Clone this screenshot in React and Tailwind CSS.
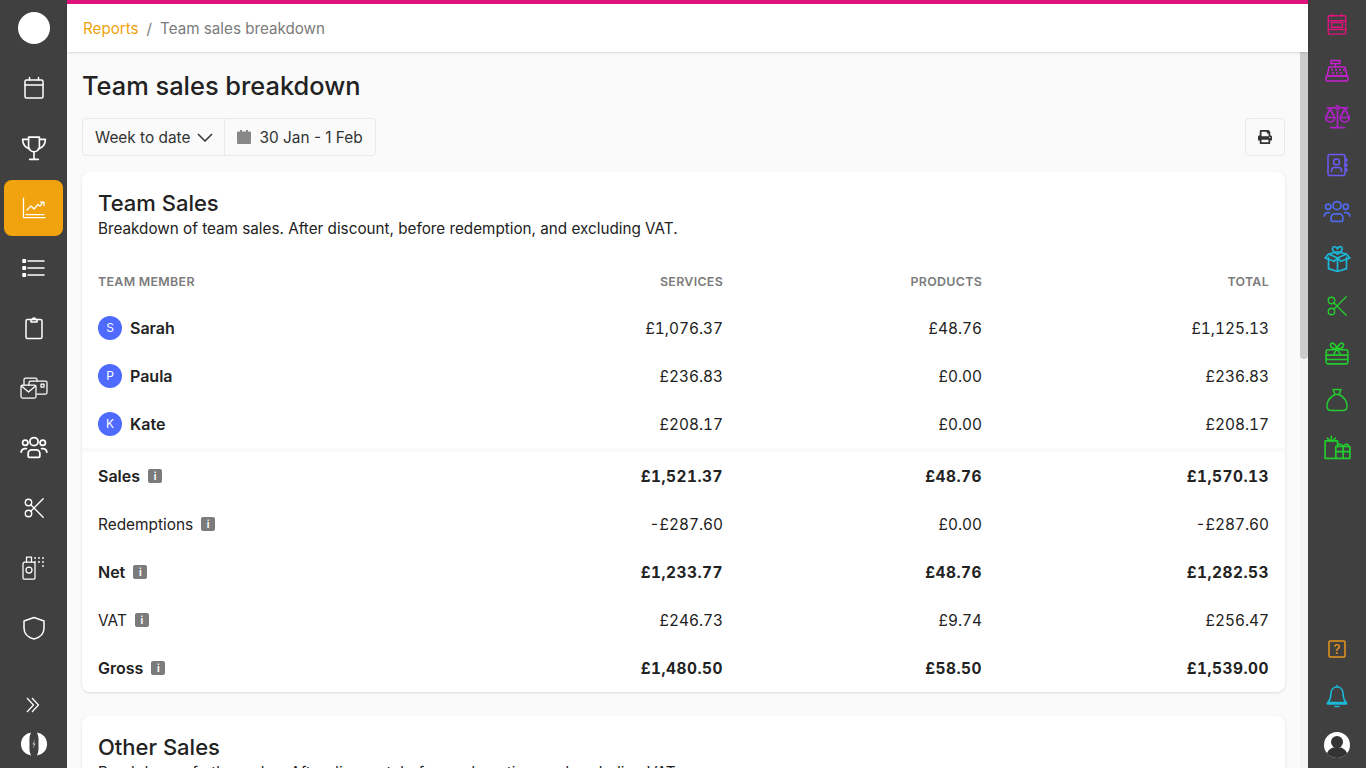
import { FaPrint } from "react-icons/fa";

const stroke = {
  fill: "none",
  stroke: "currentColor",
  strokeWidth: 1.5,
  strokeLinecap: "round",
  strokeLinejoin: "round",
};

function Icon({ size = 24, children, className = "" }) {
  return (
    <svg width={size} height={size} viewBox="0 0 24 24" className={className} {...stroke}>
      {children}
    </svg>
  );
}

/* left rail */
const CalendarIcon = () => (
  <Icon>
    <rect x="3" y="4" width="18" height="18" rx="1.5" />
    <path d="M3 9h18M7.5 1.5V4M16.5 1.5V4" />
  </Icon>
);
const TrophyIcon = () => (
  <Icon size={26}>
    <path d="M7 2h10v8.5a5 5 0 0 1-10 0V2Z" />
    <path d="M7 4H1.500c0 4.500 2 7.500 6.500 9M17 4h5.500c0 4.500-2 7.500-6.500 9M12 15.500V22M8 22.500h8" />
  </Icon>
);
const ChartIcon = () => (
  <Icon>
    <path d="M1.500 2v19.500H23M4 18.500H22" strokeWidth="1.250" />
    <path d="M5 14l4-4 3 3 4-4.500 2 1.500 3-4M18.500 6H22v3.500" strokeWidth="1.250" />
  </Icon>
);
const ListIcon = () => (
  <Icon>
    <path d="M6 5h16M6 12h16M6 19h16" />
    <rect x="1" y="3.800" width="2.400" height="2.400" fill="currentColor" />
    <rect x="1" y="10.800" width="2.400" height="2.400" fill="currentColor" />
    <rect x="1" y="17.800" width="2.400" height="2.400" fill="currentColor" />
  </Icon>
);
const ClipboardIcon = () => (
  <Icon>
    <rect x="4" y="3.500" width="16" height="19" rx="1.500" />
    <path d="M9 3.500h1.500a1.500 1.500 0 0 1 3 0H15V6H9V3.500Z" />
  </Icon>
);
const MailCardIcon = () => (
  <svg width="28" height="22" viewBox="0 0 28 22" {...stroke} strokeWidth="1.250">
    <path d="M4 8V2.500A1.500 1.500 0 0 1 5.500 1h10A1.500 1.500 0 0 1 17 2.500V4" />
    <path d="M9 8V5.500A1.500 1.500 0 0 1 10.500 4h15A1.500 1.500 0 0 1 27 5.500v10a1.500 1.500 0 0 1-1.500 1.500H17" />
    <rect x="1" y="8" width="15" height="13" rx="1.500" />
    <path d="M1.500 9l7 6 7-6" />
    <rect x="21" y="7" width="3" height="3" />
  </svg>
);
const TeamIcon = ({ size = 28 }) => (
  <Icon size={size}>
    <circle cx="12" cy="6.500" r="3.500" />
    <circle cx="4.500" cy="7.500" r="2.300" />
    <circle cx="19.500" cy="7.500" r="2.300" />
    <path d="M7 19v-2.500a3 3 0 0 1 3-3h4a3 3 0 0 1 3 3V19a1 1 0 0 1-1 1H8a1 1 0 0 1-1-1Z" />
    <path d="M1 15.500a3.500 3.500 0 0 1 3-3h1.500M23 15.500a3.500 3.500 0 0 0-3-3h-1.500" />
  </Icon>
);
const ScissorsIcon = () => (
  <Icon size={22}>
    <circle cx="6" cy="6" r="3.500" />
    <circle cx="6" cy="18" r="3.500" />
    <path d="M8.500 8.500L22 22M8.500 15.500L22 2" />
  </Icon>
);
const SprayIcon = () => (
  <svg width="24" height="24" viewBox="0 0 24 24" {...stroke} strokeWidth="1.250">
    <path d="M4.500 6V1h5v5" />
    <path d="M3 6h8a2 2 0 0 1 2 2v14a1 1 0 0 1-1 1H2a1 1 0 0 1-1-1V8a2 2 0 0 1 2-2Z" />
    <circle cx="7" cy="14" r="3" />
    <path d="M13 2h.01M17 2h.01M21 2h.01M13 6h.01M17 6h.01M21 6h.01M21 10h.01" strokeWidth="1.800" />
  </svg>
);
const ShieldIcon = () => (
  <Icon>
    <path d="M12 1.500l10 3.500v7c0 5.500-4 9.500-10 11C6 21.500 2 17.500 2 12V5l10-3.500Z" />
  </Icon>
);

/* right rail */
const DiaryIcon = () => (
  <Icon size={22}>
    <rect x="2.500" y="3" width="19" height="20" rx="1" />
    <path d="M2.500 8.500h19M2.500 18h19M7 1v2M17 1v2" />
    <rect x="6" y="10.500" width="12" height="5" />
  </Icon>
);
const TillIcon = () => (
  <Icon size={24}>
    <path d="M6 1.500h9v3H6zM10.500 4.500V8" />
    <path d="M4 8h16l2 9H2l2-9Z" />
    <rect x="1" y="17" width="22" height="5" rx="1.500" />
    <path d="M7 11h.01M11 11h.01M15 11h.01M19 11h.01M8 14h.01M12 14h.01M16 14h.01" strokeWidth="2" />
  </Icon>
);
const ScalesIcon = () => (
  <Icon size={27}>
    <circle cx="12" cy="3" r="1.300" />
    <path d="M3 3.500h7.500M13.500 3.500H21M12 5v15.500M6 21h12" />
    <path d="M5.500 4L1.500 12h8L5.500 4ZM18.500 4L14.500 12h8l-4-8Z" />
    <path d="M1.500 12a4 4 0 0 0 8 0M14.500 12a4 4 0 0 0 8 0" />
  </Icon>
);
const ContactsIcon = () => (
  <Icon>
    <rect x="3" y="1.500" width="17" height="21" rx="2" />
    <circle cx="11.500" cy="9" r="3" />
    <path d="M6.500 18.500v-1a3 3 0 0 1 3-3h4a3 3 0 0 1 3 3v1" />
    <path d="M21.500 6v2M21.500 11v2M21.500 16v2" strokeWidth="2" />
  </Icon>
);
const GiftBoxIcon = () => (
  <Icon size={27}>
    <path d="M4 11v10L12 23.500l8-2.500V11" />
    <path d="M12 13.500v10M4 8L1 11.500l8 3 3-3 3 3 8-3L20 8l-8 3.500L4 8ZM4 8l8-2 8 2" />
    <path d="M12 8C10 7 7 5.500 7.500 3c.5-2 3.500-2 4.500.5M12 8c2-1 4.500-3 4-5.500C15.500 1 13 1 12 3.500" />
  </Icon>
);
const VoucherIcon = () => (
  <Icon size={26}>
    <rect x="2" y="9" width="20" height="13" rx="1.500" />
    <path d="M2 14h20M2 18h20" />
    <path d="M12 8C9 8 6 7 6 4.500S10 2 12 8c2-6 6-6 6-3.500S15 8 12 8ZM12 8l-3 5M12 8l3 5" />
  </Icon>
);
const BagIcon = () => (
  <Icon>
    <path d="M8 1.500h8l-2 5h-4l-2-5ZM9.500 6.500h5" />
    <path d="M10 6.500C5 9 2 13 2 18c0 3 1.500 4.500 4 4.500h12c2.500 0 4-1.500 4-4.500 0-5-3-9-8-11.500" />
  </Icon>
);
const GiftsIcon = () => (
  <Icon size={27}>
    <path d="M11 22.500H1V7h11v5" />
    <path d="M3 4.500l2 2.500M6.500 3v4M10 4.500L8 7" />
    <rect x="10.500" y="12" width="12.500" height="10.500" />
    <path d="M10.500 16.500H23M17 12v10.500M17 12c-2-3-5-3-4.500 0M17 12c2-3 5-3 4.500 0" />
  </Icon>
);
const HelpIcon = () => (
  <svg width="18" height="18" viewBox="0 0 18 18" fill="none" stroke="currentColor" strokeWidth="1.500">
    <rect x="1" y="1" width="16" height="16" rx="1" />
    <text x="9" y="13.500" textAnchor="middle" fontSize="13" fontWeight="500" fill="currentColor" stroke="none" fontFamily="Inter, sans-serif">?</text>
  </svg>
);
const BellIcon = () => (
  <Icon>
    <path d="M12 1.500V3M12 3c-4 0-6 3-6 6.500 0 4-1 6.500-3 9h18c-2-2.500-3-5-3-9C18 6 16 3 12 3ZM2.500 18.500v1.500h19v-1.500M10 22.500h4" />
  </Icon>
);

const leftNav = [
  { icon: CalendarIcon },
  { icon: TrophyIcon },
  { icon: ChartIcon, active: true },
  { icon: ListIcon },
  { icon: ClipboardIcon },
  { icon: MailCardIcon },
  { icon: TeamIcon },
  { icon: ScissorsIcon },
  { icon: SprayIcon },
  { icon: ShieldIcon },
];

const rightNav = [
  { icon: DiaryIcon, color: "text-[#e0127c]" },
  { icon: TillIcon, color: "text-[#c81fd0]" },
  { icon: ScalesIcon, color: "text-[#b020c8]" },
  { icon: ContactsIcon, color: "text-[#6a5cf5]" },
  { icon: TeamIcon, color: "text-[#4f69e8]" },
  { icon: GiftBoxIcon, color: "text-[#1cb8d8]" },
  { icon: ScissorsIcon, color: "text-[#22cc2e]" },
  { icon: VoucherIcon, color: "text-[#22cc2e]" },
  { icon: BagIcon, color: "text-[#22cc2e]" },
  { icon: GiftsIcon, color: "text-[#22cc2e]" },
];

const members = [
  { initial: "S", name: "Sarah", services: "£1,076.37", products: "£48.76", total: "£1,125.13" },
  { initial: "P", name: "Paula", services: "£236.83", products: "£0.00", total: "£236.83" },
  { initial: "K", name: "Kate", services: "£208.17", products: "£0.00", total: "£208.17" },
];

const totals = [
  { label: "Sales", bold: true, services: "£1,521.37", products: "£48.76", total: "£1,570.13" },
  { label: "Redemptions", services: "-£287.60", products: "£0.00", total: "-£287.60" },
  { label: "Net", bold: true, services: "£1,233.77", products: "£48.76", total: "£1,282.53" },
  { label: "VAT", services: "£246.73", products: "£9.74", total: "£256.47" },
  { label: "Gross", bold: true, services: "£1,480.50", products: "£58.50", total: "£1,539.00" },
];

const rowGrid = "grid grid-cols-[365px_260px_259px_287px] items-center";

function InfoBadge() {
  return (
    <span className="ml-2 flex h-3.5 w-3.5 items-center justify-center rounded-[2px] bg-[#7b7b7b] text-[10px] leading-none font-bold text-white">
      i
    </span>
  );
}

function Avatar({ initial }) {
  return (
    <span className="mr-2 flex h-6 w-6 items-center justify-center rounded-full bg-[#4f6bff] text-xs font-normal text-white">
      {initial}
    </span>
  );
}

export default function App() {
  return (
    <div
      className="flex h-screen overflow-hidden bg-[#fafafa] text-[#222222]"
      style={{ fontFamily: "Inter, 'Liberation Sans', sans-serif" }}
    >
      {/* Left rail */}
      <aside className="flex h-full w-[67px] shrink-0 flex-col items-center bg-[#404040] text-white">
        <div className="mt-3 h-8 w-8 shrink-0 rounded-full bg-white" />
        <nav className="mt-[14px] flex w-full flex-col">
          {leftNav.map(({ icon: NavIcon, active }, i) => (
            <div key={i} className="flex h-[60px] items-center pr-1 pl-1">
              <div
                className={`flex h-14 w-full items-center justify-center rounded-lg ${
                  active ? "bg-[#f0a30f]" : ""
                }`}
              >
                <NavIcon />
              </div>
            </div>
          ))}
        </nav>
        <div className="mt-auto flex flex-col items-center pb-[11px]">
          <svg width="14" height="16" viewBox="0 0 14 16" fill="none" stroke="currentColor" strokeWidth="1.250" className="-ml-0.5">
            <path d="M1 1l6.500 7L1 15M6 1l6.500 7L6 15" />
          </svg>
          <svg width="26" height="26" viewBox="0 0 26 26" className="mt-[18px]" fill="#ffffff">
            <path d="M10 1.500A11.600 11.600 0 0 0 10 24.500C8 20 8.500 17 8.500 13S8 6 10 1.500Z" />
            <path d="M16 1.500A11.600 11.600 0 0 1 16 24.500C18 20 17.500 17 17.500 13S18 6 16 1.500Z" />
            <path d="M14 8l-2.500 5.500h1.500l-1 4.500 2.500-5.500h-1.500l1-4.500Z" opacity="0.7" />
          </svg>
        </div>
      </aside>

      {/* Main column */}
      <div className="relative flex h-full min-w-0 flex-1 flex-col">
        <header className="z-10 h-[52px] shrink-0 border-t-4 border-[#e0127c] bg-white shadow-sm">
          <div className="flex h-full items-center px-4 pt-[2px] text-[15.200px]">
            <span className="text-[#f0a30f]">Reports</span>
            <span className="mx-2 text-[#7b7b7b]">/</span>
            <span className="text-[#7b7b7b]">Team sales breakdown</span>
          </div>
        </header>

        <main className="min-h-0 flex-1 overflow-hidden pt-4 pr-[23px] pl-[15px]">
          <h1 className="text-[25.400px] leading-9 font-[550]">Team sales breakdown</h1>

          <div className="mt-[14px] flex items-center justify-between">
            <div className="flex h-[38px] items-center rounded border border-[#e8e8e8] text-[15.400px] text-[#333333]">
              <div className="flex h-full items-center border-r border-[#e8e8e8] pr-[11px] pl-3">
                <span className="pt-[2px]">Week to date</span>
                <svg width="16" height="9" viewBox="0 0 16 9" fill="none" stroke="currentColor" strokeWidth="1.500" className="ml-[7px]">
                  <path d="M1 1l7 7 7-7" />
                </svg>
              </div>
              <div className="flex h-full items-center pr-3 pl-3">
                <svg width="14" height="14" viewBox="0 0 14 14" fill="#888888" className="mr-2">
                  <path d="M3 0h2v1.500h4V0h2v1.500h2a1 1 0 0 1 1 1V13a1 1 0 0 1-1 1H1a1 1 0 0 1-1-1V2.500a1 1 0 0 1 1-1h2V0Z" />
                </svg>
                <span className="pt-[2px]">30 Jan - 1 Feb</span>
              </div>
            </div>
            <div className="flex h-[38px] w-10 items-center justify-center rounded border border-[#e8e8e8] text-[#333333]">
              <FaPrint size={14} />
            </div>
          </div>

          {/* Team sales card */}
          <section className="mt-4 rounded-lg bg-white pt-4 shadow-sm">
            <div className="px-4">
              <h2 className="text-[22px] leading-[30px] font-medium">Team Sales</h2>
              <p className="text-[15.250px] leading-[22px]">
                Breakdown of team sales. After discount, before redemption, and excluding VAT.
              </p>
            </div>

            <div className="mt-[17px] px-4">
              <div className={`${rowGrid} h-[47px] pt-1 text-[12.400px] font-semibold tracking-wide text-[#7b7b7b]`}>
                <span>TEAM MEMBER</span>
                <span className="text-right">SERVICES</span>
                <span className="text-right">PRODUCTS</span>
                <span className="text-right">TOTAL</span>
              </div>
              {members.map((m) => (
                <div key={m.name} className={`${rowGrid} h-12 text-[15.400px] tabular-nums`}>
                  <span className="flex items-center text-base font-semibold">
                    <Avatar initial={m.initial} />
                    {m.name}
                  </span>
                  <span className="pt-[2px] text-right">{m.services}</span>
                  <span className="pt-[2px] text-right">{m.products}</span>
                  <span className="pt-[2px] text-right">{m.total}</span>
                </div>
              ))}
            </div>

            <div className="h-1 bg-[#fafafa]" />

            <div className="px-4">
              {totals.map((t) => {
                const numberClass = t.bold
                  ? "pt-[2px] text-right font-bold tracking-[0.5px]"
                  : "pt-[2px] text-right";
                return (
                  <div key={t.label} className={`${rowGrid} h-12 text-[15.400px] tabular-nums`}>
                    <span className={`flex items-center ${t.bold ? "text-base font-semibold" : ""}`}>
                      <span className={t.bold ? "" : "pt-[2px]"}>{t.label}</span>
                      <InfoBadge />
                    </span>
                    <span className={numberClass}>{t.services}</span>
                    <span className={numberClass}>{t.products}</span>
                    <span className={numberClass}>{t.total}</span>
                  </div>
                );
              })}
            </div>
          </section>

          {/* Other sales card, cut off by the fold */}
          <section className="mt-6 rounded-lg bg-white px-4 pt-4 pb-8 shadow-sm">
            <h2 className="text-[22px] leading-[30px] font-medium">Other Sales</h2>
            <p className="text-[15.250px] leading-[22px]">
              Breakdown of other sales. After discount, before redemption, and excluding VAT.
            </p>
          </section>
        </main>

        {/* scrollbar */}
        <div className="absolute top-[52px] right-0 bottom-0 w-2 bg-[#f5f5f5]">
          <div className="h-[307px] w-full rounded-b bg-[#cccccc]" />
        </div>
      </div>

      {/* Right rail */}
      <aside className="flex h-full w-[58px] shrink-0 flex-col items-center bg-[#404040]">
        <nav className="flex w-full flex-col items-center">
          {rightNav.map(({ icon: NavIcon, color }, i) => (
            <div key={i} className={`flex h-[47px] w-full items-center justify-center ${color}`}>
              <NavIcon size={i === 4 ? 28 : undefined} />
            </div>
          ))}
        </nav>
        <div className="mt-auto flex flex-col items-center pb-[10px]">
          <div className="text-[#e8951c]">
            <HelpIcon />
          </div>
          <div className="mt-[26px] text-[#1cb8d8]">
            <BellIcon />
          </div>
          <div className="relative mt-6 h-[26px] w-[26px] overflow-hidden rounded-full bg-white">
            <div className="absolute top-[4px] left-[7px] h-3 w-3 rounded-full bg-[#333333]" />
            <div className="absolute top-[15px] left-[2px] h-5 w-[22px] rounded-full bg-[#333333]" />
          </div>
        </div>
      </aside>
    </div>
  );
}
